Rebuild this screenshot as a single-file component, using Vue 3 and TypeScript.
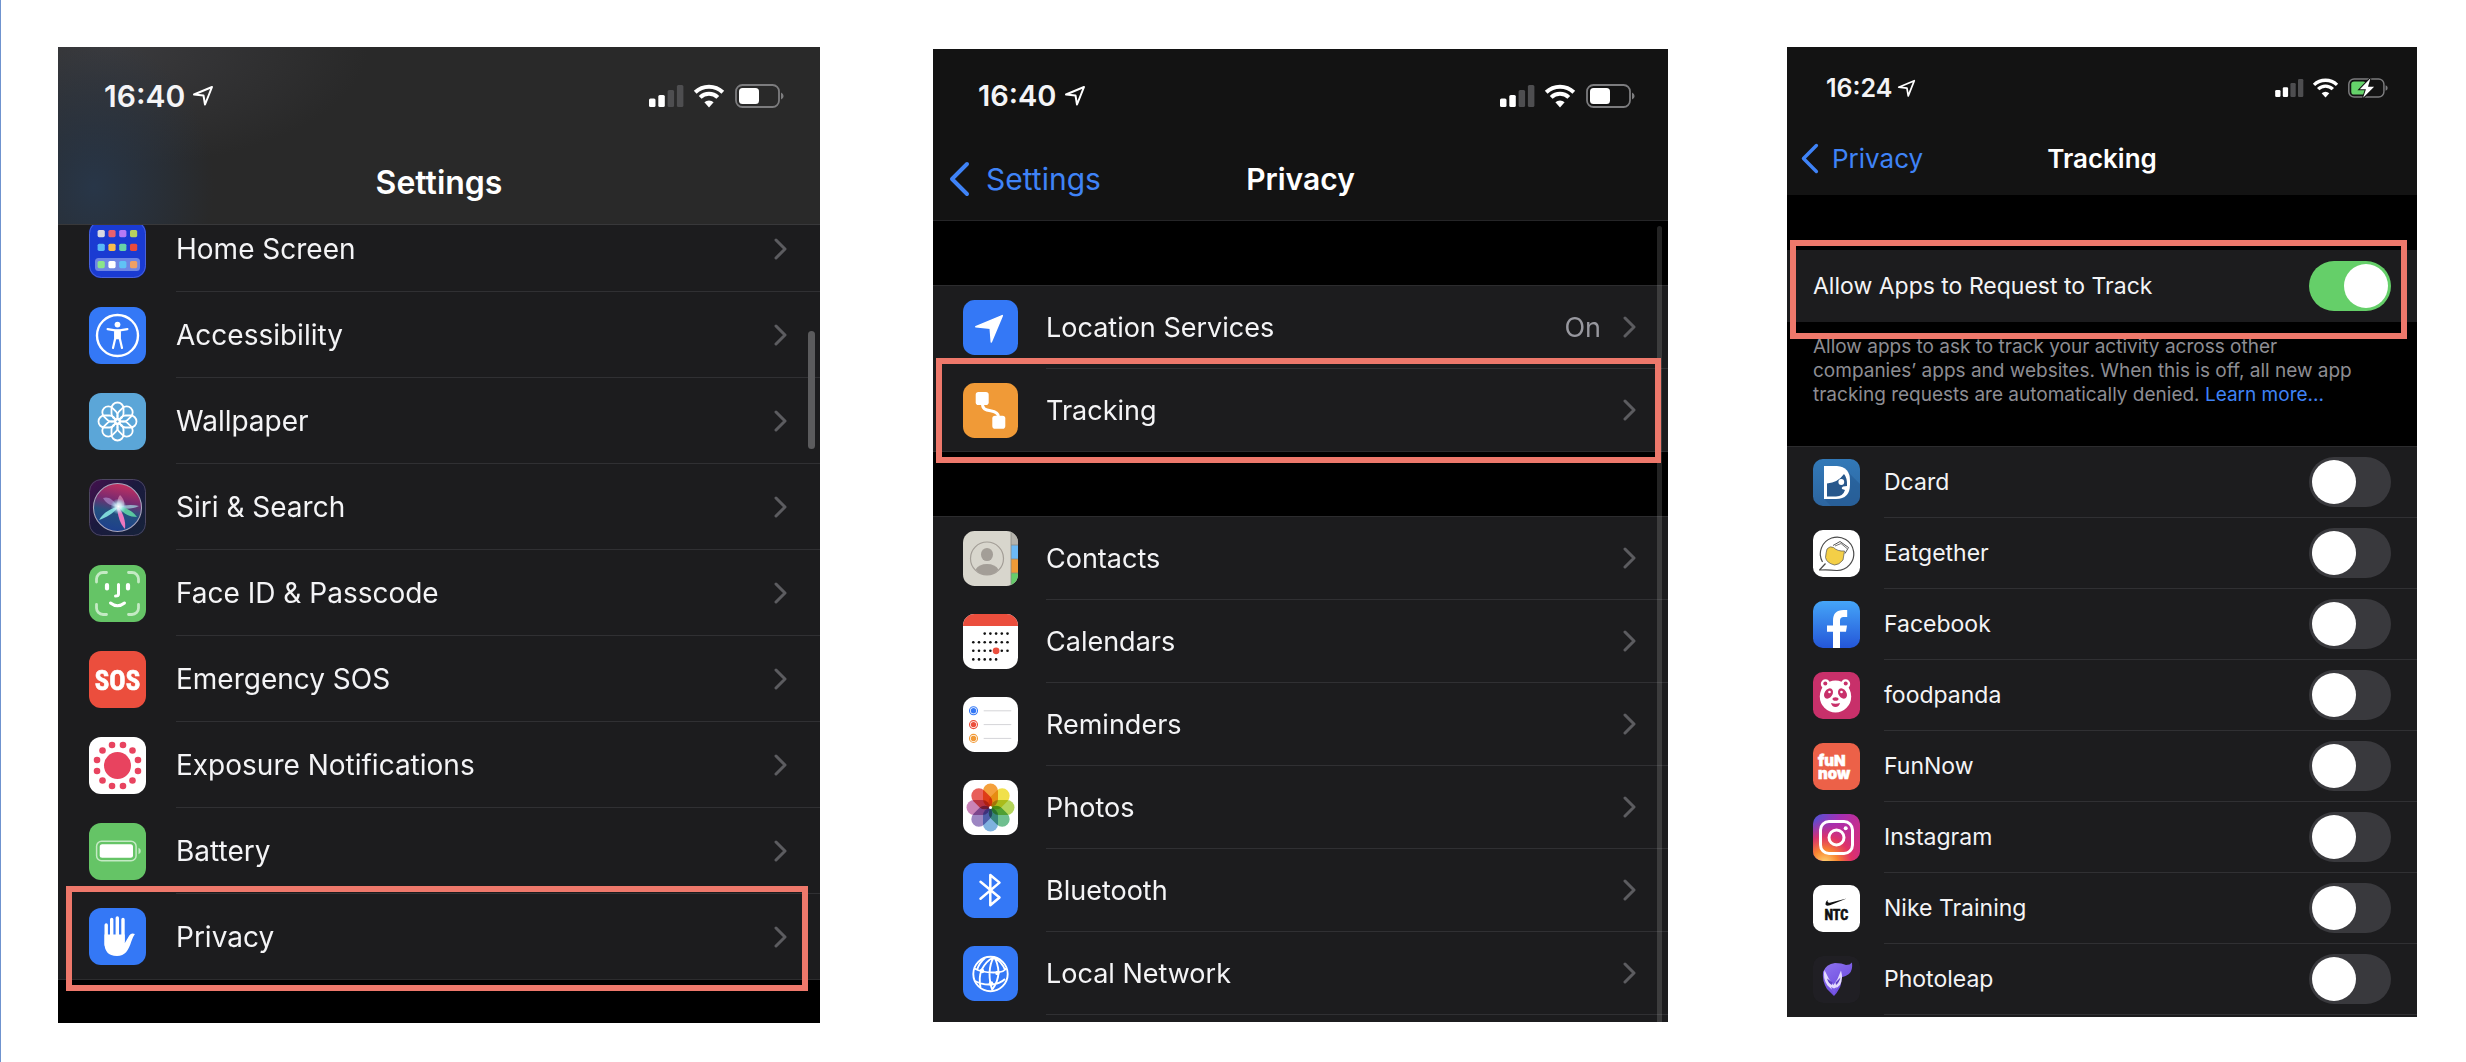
<script setup lang="ts">
import { ref } from 'vue'

interface Row {
  label: string
  icon: string
  value?: string
  marked?: boolean
}

interface AppRow {
  label: string
  icon: string
  on: boolean
}

const range = (n: number): number[] => Array.from({ length: n }, (_, i) => i)

const tile = (x: number, y: number, fill: string): string =>
  `<rect x="${x}" y="${y}" width="7.2" height="7.2" rx="1.6" fill="${fill}"/>`

const homeTiles = [
  ['#d9d9e2', '#e8606e', '#b57af5', '#b5d05f'],
  ['#58b8f7', '#f6bd4e', '#68d3a7', '#e94a3b'],
  ['#8be58a', '#ffffff', '#60c3f5', '#efa063'],
]
  .map((line, r) => line.map((c, i) => tile(8.6 + i * 10.8, [9, 22.7, 40][r], c)).join(''))
  .join('')

const exposureDots = range(12)
  .map((i) => {
    const a = ((15 + i * 30) * Math.PI) / 180
    return `<circle cx="${28.5 + 21.2 * Math.cos(a)}" cy="${28.5 + 21.2 * Math.sin(a)}" r="3.3"/>`
  })
  .join('')

const wallpaperPetals = range(8)
  .map((i) => `<rect x="-6" y="-19" width="12" height="17" rx="6" transform="rotate(${i * 45})"/>`)
  .join('')

const photoPetals = ['#f4a03c', '#f1e04b', '#b4d55a', '#6fbf8f', '#7fb2df', '#9c86c2', '#c983b8', '#e8605a']
  .map((c, i) => `<rect x="-7.5" y="-24" width="15" height="23.5" rx="7.5" fill="${c}" style="mix-blend-mode:multiply" transform="rotate(${i * 45})"/>`)
  .join('')

const calendarDots = [[2, 6], [0, 6], [0, 6], [0, 4]]
  .map(([from, to], r) =>
    range(7)
      .filter((i) => i >= from && i <= to)
      .map((i) => `<circle cx="${10.3 + i * 5.7}" cy="${19.6 + r * 8.6}" r="1.3"/>`)
      .join(''),
  )
  .join('')

const reminderLines = ['#3478f6', '#eb4e3d', '#f19a38']
  .map((c, i) => {
    const y = 13.8 + i * 13.8
    return `<circle cx="10.5" cy="${y}" r="4" fill="none" stroke="${c}" stroke-width="1.1"/><circle cx="10.5" cy="${y}" r="2.7" fill="${c}"/><path d="M20.7 ${y}H48.3" stroke="#d4d4d8" stroke-width="1"/>`
  })
  .join('')

const icons: Record<string, string> = {
  home: `<rect width="57" height="57" fill="#1a3bd2"/><rect x=".5" y=".5" width="56" height="56" rx="12" fill="none" stroke="#4a62d8"/><rect x="6" y="37" width="45" height="13" rx="3.5" fill="#6e86e4"/>${homeTiles}`,
  accessibility: `<rect width="57" height="57" fill="#3478f6"/><circle cx="28.5" cy="28.5" r="20.5" fill="none" stroke="#fff" stroke-width="2.4"/><circle cx="28.5" cy="17.6" r="2.9" fill="#fff"/><path d="M18.6 22.1l7.6 1.2h4.6l7.6-1.2M26.2 24v7.5L24 41M30.8 24v7.5L33 41" fill="none" stroke="#fff" stroke-width="2.2" stroke-linecap="round"/><path d="M25.6 22.8h5.8v9.4h-5.8z" fill="#fff"/>`,
  wallpaper: `<rect width="57" height="57" fill="#5ba6d8"/><g transform="translate(28.5 28.5)" fill="none" stroke="#fff" stroke-width="1.8">${wallpaperPetals}</g>`,
  siri: `<defs><linearGradient id="siriBg" x1="0" y1="0" x2="1" y2="1"><stop offset="0" stop-color="#46104e"/><stop offset=".45" stop-color="#1b1a3e"/><stop offset="1" stop-color="#15233a"/></linearGradient><linearGradient id="siriBall" x1=".6" y1="0" x2=".4" y2="1"><stop offset="0" stop-color="#c5305f"/><stop offset=".35" stop-color="#7a2a70"/><stop offset=".6" stop-color="#25507e"/><stop offset="1" stop-color="#1d3f8e"/></linearGradient><radialGradient id="siriGlow"><stop offset="0" stop-color="#fff"/><stop offset=".4" stop-color="#d6fbff" stop-opacity=".8"/><stop offset="1" stop-color="#8ef" stop-opacity="0"/></radialGradient></defs><rect width="57" height="57" fill="url(#siriBg)"/><rect x=".5" y=".5" width="56" height="56" rx="12" fill="none" stroke="#4c4660"/><circle cx="28.5" cy="28.5" r="24" fill="url(#siriBall)" stroke="#a9a6bd" stroke-width="1.1"/><path d="M29 28C24 20 19 17 14 19c3 6 9 8 15 9z" fill="#b89bd8" opacity=".6"/><path d="M28 28c0-6 1-10 3-12 4 4 5 8 4 12z" fill="#e8a0c4" opacity=".6"/><path d="M29 28C22 29 14 34 10 41c8-3 15-7 19-13z" fill="#8df0e6" opacity=".85"/><path d="M28 28c7-2 15-3 22-1-6 3-15 4-22 1z" fill="#a0c8d8" opacity=".8"/><path d="M29 27c7 1 15 5 19 11-8 0-15-4-19-11z" fill="#5fd4a4" opacity=".9"/><path d="M28 29c1 8 3 16 8 21 1-8-2-16-6-21z" fill="#ee78bf"/><circle cx="29.5" cy="27.5" r="8" fill="url(#siriGlow)"/>`,
  faceid: `<rect width="57" height="57" fill="#65c466"/><path d="M7.5 17v-3a6.5 6.5 0 0 1 6.500-6.500h3.500M39.500 7.500H43a6.500 6.500 0 0 1 6.500 6.500v3M49.500 39.500V43a6.500 6.500 0 0 1-6.500 6.500h-3.500M17.500 49.500H14A6.500 6.500 0 0 1 7.500 43v-3.500" fill="none" stroke="#c4eac4" stroke-width="2.800" stroke-linecap="round"/><path d="M18 20v3.500M39 20v3.500" stroke="#fff" stroke-width="4.200" stroke-linecap="round"/><path d="M29.500 19.500v9.500q0 2-3 2M21.500 38q7 5.500 14 0" fill="none" stroke="#fff" stroke-width="3" stroke-linecap="round"/>`,
  sos: `<rect width="57" height="57" fill="#eb4e3d"/><text x="28.5" y="38.5" font-size="27" font-weight="700" font-family="'Liberation Sans Narrow','Roboto Condensed','DejaVu Sans Condensed',sans-serif" text-anchor="middle" fill="#fff" stroke="#fff" stroke-width=".6">SOS</text>`,
  exposure: `<rect width="57" height="57" fill="#fff"/><g fill="#e8435f"><circle cx="28.5" cy="28.5" r="13.5"/>${exposureDots}</g>`,
  battery: `<rect width="57" height="57" fill="#65c466"/><rect x="7.600" y="18.200" width="39.500" height="19.500" rx="5" fill="none" stroke="#c4eac4" stroke-width="1.500"/><rect x="10.700" y="21.200" width="33.300" height="13.500" rx="2.500" fill="#fff"/><path d="M49.500 24.800q2.300 1 2.300 3.200t-2.300 3.200z" fill="#c4eac4"/>`,
  hand: `<rect width="57" height="57" fill="#3478f6"/><path d="M17.200 17v20M22.700 11.500v22M28.300 10v22M34 11.500v22" stroke="#fff" stroke-width="3.400" stroke-linecap="round"/><path d="M15.500 26.500h20.200v8.800l4.600-7.800q2-3 5.600-1.500-2.200 3-3.600 7.500C39.500 42.500 36 48 28 48 19 48 15.500 42.500 15.500 35.500z" fill="#fff"/>`,
  location: `<rect width="55" height="55" fill="#3478f6"/><path d="M12.800 26.800L39.300 15.600 28.300 42 27.200 28.200z" fill="#fff" stroke="#fff" stroke-width="1.500" stroke-linejoin="round"/>`,
  tracking: `<rect width="55" height="55" fill="#f09a37"/><rect x="12.700" y="9" width="13" height="13" rx="2.800" fill="#fff"/><rect x="29.300" y="32.700" width="13" height="13" rx="2.800" fill="#fff"/><path d="M19.500 21c0 5 3 6 8 6.800s8 2.200 8 6.200" fill="none" stroke="#fff" stroke-width="3"/>`,
  contacts: `<rect width="55" height="55" fill="#d8d6cd"/><path d="M48 0h7v14h-7z" fill="#b5b3ac"/><path d="M48 14h7v14h-7z" fill="#6cb9f5"/><path d="M48 28h7v14h-7z" fill="#ee9a37"/><path d="M48 42h7v13h-7z" fill="#65cc6a"/><path d="M48 0v55M48 14h7M48 28h7M48 42h7" stroke="#8c8a84" stroke-width=".8"/><circle cx="24" cy="27.500" r="16.500" fill="none" stroke="#a39e97" stroke-width="1.200"/><ellipse cx="24" cy="23.500" rx="6" ry="6.600" fill="#a39e97"/><path d="M12.500 38.500Q16 33 24 33t11.500 5.500Q31 44 24 44t-11.500-5.500z" fill="#a39e97"/>`,
  calendars: `<rect width="55" height="55" fill="#fff"/><path d="M0 0h55v12H0z" fill="#eb4e3d"/><g fill="#111">${calendarDots}</g><circle cx="33.100" cy="36.800" r="3.400" fill="#eb4e3d"/>`,
  reminders: `<rect width="55" height="55" fill="#fff"/>${reminderLines}`,
  photos: `<rect width="55" height="55" fill="#fff"/><g transform="translate(27.5 27.5)" style="isolation:isolate">${photoPetals}</g><circle cx="27.500" cy="27.500" r="1.500" fill="#fff"/>`,
  bluetooth: `<rect width="55" height="55" fill="#3478f6"/><path d="M17.500 18.800L36.500 34.500 27.300 42.300V12L36.500 19.600 17.500 35.700" fill="none" stroke="#fff" stroke-width="2.500" stroke-linejoin="round" stroke-linecap="round"/>`,
  network: `<rect width="55" height="55" fill="#3478f6"/><g fill="none" stroke="#fff" stroke-width="1.900"><circle cx="27.500" cy="28" r="17.200"/><path d="M11.500 22.500q7 4 19 4t12.500-4.500M31 11q-8 4-12.500 13-3 8-1 17.500M31 11q-4 6-4.500 16 0 10 3 17.500M31 11q4 6 4.500 15 0 9-6.500 18M22 12q-6 5-8 12M12 35q7 4 16 3.500t14-5.500M31 11q8 5 11 13"/></g><g fill="#fff"><circle cx="19" cy="25" r="2.300"/><circle cx="34.500" cy="27" r="2.300"/><circle cx="28" cy="37.500" r="2.300"/></g>`,
  dcard: `<defs><linearGradient id="dcardBg" x1="0" y1="0" x2="0" y2="1"><stop offset="0" stop-color="#3279b8"/><stop offset="1" stop-color="#2d659f"/></linearGradient></defs><rect width="47" height="47" fill="url(#dcardBg)"/><path d="M31 9l16 16v22H18l-6-6z" fill="#255a92" opacity=".6"/><path d="M11 7h13q13 1 13 14.500v4Q37 40 23 40H11z" fill="#fff"/><path d="M14 24.500q11-1 17-9.500 3.500 4 3 12l-4 .5q-2 1-1 2.500l3 1q-2 6.500-9 6.500h-9z" fill="#28588c"/><circle cx="28.300" cy="23" r="2.900" fill="#fff"/>`,
  eatgether: `<rect width="47" height="47" fill="#fff"/><path d="M9.500 32a16.700 16.700 0 1 1 14 8.500q-8-1-17-.5l6-6.500" fill="none" stroke="#4b4b4b" stroke-width="1.200" stroke-linejoin="round"/><path d="M14 19q3-3.500 6.500-1.500 4 4 11 3.500l-1.500 9q-4 5-8.500 5-8-2-9-7.500.5-5 1.500-8.500z" fill="#f4cf47" stroke="#555" stroke-width=".7"/><path d="M20 15.500l7-4 8.500 6-3.500 6" fill="none" stroke="#555" stroke-width="1"/><path d="M22 16l6-2.500 6 5" fill="none" stroke="#777" stroke-width="1"/>`,
  facebook: `<defs><linearGradient id="fbBg" x1="0" y1="0" x2="0" y2="1"><stop offset="0" stop-color="#45a5f8"/><stop offset="1" stop-color="#2456d8"/></linearGradient></defs><rect width="47" height="47" fill="url(#fbBg)"/><path d="M34.200 12.500h-3.700q-7 0-7 7V47" fill="none" stroke="#fff" stroke-width="7"/><path d="M14 24.600h20l-1 6.200H14z" fill="#fff"/>`,
  foodpanda: `<rect width="47" height="47" fill="#c8306a"/><g fill="#fff"><circle cx="12.500" cy="12" r="4.700"/><circle cx="32.500" cy="12" r="4.700"/><ellipse cx="22.500" cy="24.500" rx="15.700" ry="16"/></g><g fill="#c8306a"><circle cx="12.300" cy="11.500" r="2"/><circle cx="32.700" cy="11.500" r="2"/><ellipse cx="15.500" cy="21.500" rx="4" ry="5.600" transform="rotate(32 15.500 21.500)"/><ellipse cx="29.500" cy="21.500" rx="4" ry="5.600" transform="rotate(-32 29.500 21.500)"/><ellipse cx="22.500" cy="27" rx="3" ry="1.800"/><path d="M18 31q4.500 1.500 9 0-1 4-4.500 4T18 31z"/></g><g fill="#fff"><circle cx="16.500" cy="20" r="1.300"/><circle cx="28.500" cy="20" r="1.300"/></g>`,
  funnow: `<rect width="47" height="47" fill="#ec6148"/><g fill="#fff" stroke="#fff" stroke-width=".5" font-weight="900" font-family="Inter,'Open Sans',sans-serif"><text x="5" y="23" font-size="15">fuN</text><text x="5" y="36" font-size="15">now</text></g>`,
  instagram: `<defs><linearGradient id="igTop" x1="0" y1="0" x2="1" y2=".6"><stop offset="0" stop-color="#4b55d6"/><stop offset=".45" stop-color="#a62fb4"/><stop offset="1" stop-color="#d42e7c"/></linearGradient><radialGradient id="igGlow" cx=".25" cy="1.050" r=".95"><stop offset="0" stop-color="#ffd776"/><stop offset=".3" stop-color="#f9852f"/><stop offset=".6" stop-color="#e5325f" stop-opacity=".85"/><stop offset="1" stop-color="#c02d98" stop-opacity="0"/></radialGradient></defs><rect width="47" height="47" fill="url(#igTop)"/><rect width="47" height="47" fill="url(#igGlow)"/><g fill="none" stroke="#fff" stroke-width="3"><rect x="7.500" y="7.500" width="32" height="32" rx="8.500"/><circle cx="23.500" cy="23.500" r="7.500"/></g><circle cx="32.700" cy="14.200" r="2" fill="#fff"/>`,
  nike: `<rect width="47" height="47" fill="#fff"/><path d="M33.700 13.500L17 20.200q-4 1.300-4.600-1-.2-2 2.300-4.500-.8 3.300 2 3z" fill="#111"/><text x="23.300" y="35" font-size="14" font-weight="700" font-family="'Liberation Sans Narrow','Roboto Condensed','DejaVu Sans Condensed',sans-serif" text-anchor="middle" fill="#111" stroke="#111" stroke-width=".6">NTC</text>`,
  photoleap: `<defs><linearGradient id="foxFur" x1="0" y1="0" x2=".6" y2="1"><stop offset="0" stop-color="#8f74f0"/><stop offset="1" stop-color="#6a48dd"/></linearGradient></defs><rect width="47" height="47" rx="10" fill="#201f24"/><path d="M10 16q3-8 12-9 7 0 11 2 4 0 6-2.500 1 8-3 11.500-4 3-8 3.500 1 7-2 11.500-2 4-5 7-3-3-7-7-5-8-4-17z" fill="url(#foxFur)"/><path d="M11.500 14l4.500 9 4.500 6 4-6 3.500-8.500q2.500 8.500-1 14.500l-6.500 6-6-5.500q-5-7-3-15.500z" fill="#e3dafd"/><path d="M14 22.500l5.500 4-.5 2.500q-3.500-1.500-5-6.500zM27.500 21.500l-5 5 .5 2.500q3-2 4.500-7.500z" fill="#5d3fc4"/><path d="M18 31l3 1.500 3-1.500-3 8z" fill="#7a5ae6"/>`,
}

const settingsRows: Row[] = [
  { label: 'Home Screen', icon: 'home' },
  { label: 'Accessibility', icon: 'accessibility' },
  { label: 'Wallpaper', icon: 'wallpaper' },
  { label: 'Siri & Search', icon: 'siri' },
  { label: 'Face ID & Passcode', icon: 'faceid' },
  { label: 'Emergency SOS', icon: 'sos' },
  { label: 'Exposure Notifications', icon: 'exposure' },
  { label: 'Battery', icon: 'battery' },
  { label: 'Privacy', icon: 'hand', marked: true },
]

const privacyGroups: Row[][] = [
  [
    { label: 'Location Services', icon: 'location', value: 'On' },
    { label: 'Tracking', icon: 'tracking', marked: true },
  ],
  [
    { label: 'Contacts', icon: 'contacts' },
    { label: 'Calendars', icon: 'calendars' },
    { label: 'Reminders', icon: 'reminders' },
    { label: 'Photos', icon: 'photos' },
    { label: 'Bluetooth', icon: 'bluetooth' },
    { label: 'Local Network', icon: 'network' },
  ],
]

const allowTracking = ref(true)
const apps = ref<AppRow[]>([
  { label: 'Dcard', icon: 'dcard', on: false },
  { label: 'Eatgether', icon: 'eatgether', on: false },
  { label: 'Facebook', icon: 'facebook', on: false },
  { label: 'foodpanda', icon: 'foodpanda', on: false },
  { label: 'FunNow', icon: 'funnow', on: false },
  { label: 'Instagram', icon: 'instagram', on: false },
  { label: 'Nike Training', icon: 'nike', on: false },
  { label: 'Photoleap', icon: 'photoleap', on: false },
])

const arrowPath = 'M2 9.500L20 2 13 19.500 11.500 10.500z'
const signalArt =
  '<rect x="0" y="13.500" width="6.500" height="8.500" rx="1.500" fill="#fff"/><rect x="9.300" y="10" width="6.500" height="12" rx="1.500" fill="#fff"/><rect x="18.600" y="5" width="6.500" height="17" rx="1.500" fill="#4e4e50"/><rect x="27.900" y="0" width="6.500" height="22" rx="1.500" fill="#4e4e50"/>'
const wifiArt =
  '<path d="M2.200 8.200a20 20 0 0 1 27.600 0M7.200 13.300a12.500 12.500 0 0 1 17.600 0" fill="none" stroke="#fff" stroke-width="4"/><path d="M16 23.500l-4.600-5.200a6.500 6.500 0 0 1 9.200 0z" fill="#fff"/>'
const batteryShell =
  '<rect x="1" y="1" width="43" height="22" rx="6.500" fill="none" stroke="#7c7c7e" stroke-width="1.800"/><path d="M46 8.500q2.600 1 2.600 3.500T46 15.500z" fill="#7c7c7e"/>'
const batteryArt = `${batteryShell}<rect x="4" y="4" width="20" height="16" rx="3.500" fill="#fff"/>`
const chargingArt = `${batteryShell}<rect x="4" y="4" width="18" height="16" rx="3.500" fill="#65d26a"/><path d="M27.500 0L14.500 13.500h7.500L18.500 24 32 10.500h-7.500z" fill="#fff" stroke="#131313" stroke-width="2.500" paint-order="stroke"/>`
</script>

<template>
  <main class="page">
    <section class="phone phone-settings" aria-label="Settings">
      <header class="top">
        <div class="status">
          <span class="time">16:40</span>
          <svg class="arrow" viewBox="0 0 22 22"><path :d="arrowPath" /></svg>
          <svg class="signal" viewBox="0 0 35 22" v-html="signalArt" />
          <svg class="wifi" viewBox="0 0 32 24" v-html="wifiArt" />
          <svg class="cell" viewBox="0 0 49 24" v-html="batteryArt" />
        </div>
        <div class="nav"><h1>Settings</h1></div>
      </header>
      <nav class="group tucked">
        <a v-for="row in settingsRows" :key="row.label" href="#" class="row" :class="{ marked: row.marked }">
          <svg class="icon" viewBox="0 0 57 57" v-html="icons[row.icon]" />
          <span class="body">
            <span class="label">{{ row.label }}</span>
            <svg class="chevron" viewBox="0 0 13 22"><path d="M2 2l9 9-9 9" /></svg>
          </span>
        </a>
      </nav>
      <span class="thumb" />
    </section>

    <section class="phone phone-privacy" aria-label="Privacy">
      <header class="top">
        <div class="status">
          <span class="time">16:40</span>
          <svg class="arrow" viewBox="0 0 22 22"><path :d="arrowPath" /></svg>
          <svg class="signal" viewBox="0 0 35 22" v-html="signalArt" />
          <svg class="wifi" viewBox="0 0 32 24" v-html="wifiArt" />
          <svg class="cell" viewBox="0 0 49 24" v-html="batteryArt" />
        </div>
        <div class="nav">
          <a href="#" class="back"><svg viewBox="0 0 22 36"><path d="M19 3L4 18l15 15" /></svg>Settings</a>
          <h1>Privacy</h1>
        </div>
      </header>
      <nav v-for="(group, g) in privacyGroups" :key="g" class="group">
        <a v-for="row in group" :key="row.label" href="#" class="row" :class="{ marked: row.marked }">
          <svg class="icon" viewBox="0 0 55 55" v-html="icons[row.icon]" />
          <span class="body">
            <span class="label">{{ row.label }}</span>
            <span v-if="row.value" class="value">{{ row.value }}</span>
            <svg class="chevron" viewBox="0 0 13 22"><path d="M2 2l9 9-9 9" /></svg>
          </span>
        </a>
      </nav>
      <span class="thumb" />
    </section>

    <section class="phone phone-tracking" aria-label="Tracking">
      <header class="top">
        <div class="status">
          <span class="time">16:24</span>
          <svg class="arrow" viewBox="0 0 22 22"><path :d="arrowPath" /></svg>
          <svg class="signal" viewBox="0 0 35 22" v-html="signalArt" />
          <svg class="wifi" viewBox="0 0 32 24" v-html="wifiArt" />
          <svg class="cell" viewBox="0 0 49 24" v-html="chargingArt" />
        </div>
        <div class="nav">
          <a href="#" class="back"><svg viewBox="0 0 22 36"><path d="M19 3L4 18l15 15" /></svg>Privacy</a>
          <h1>Tracking</h1>
        </div>
      </header>
      <label class="row allow marked">
        <span class="label">Allow Apps to Request to Track</span>
        <input v-model="allowTracking" type="checkbox" role="switch" class="switch" />
      </label>
      <p class="note">
        Allow apps to ask to track your activity across other companies’ apps and websites. When this is off, all new
        app tracking requests are automatically denied. <a href="#">Learn more...</a>
      </p>
      <div class="group">
        <label v-for="app in apps" :key="app.label" class="row">
          <svg class="icon" viewBox="0 0 47 47" v-html="icons[app.icon]" />
          <span class="body">
            <span class="label">{{ app.label }}</span>
            <input v-model="app.on" type="checkbox" role="switch" class="switch" />
          </span>
        </label>
      </div>
    </section>
  </main>
</template>

<style>
body {
  margin: 0;
  background: #fff;
}
</style>

<style scoped>
* {
  box-sizing: border-box;
}

.page {
  display: flex;
  align-items: flex-start;
  min-height: 100vh;
  padding: 47px 49px 39px 57px;
  border-left: 1px solid #6f93cf;
  background: #fff;
  font-family: Inter, 'Liberation Sans', sans-serif;
  color: #f4f4f6;
}

.phone {
  position: relative;
  min-width: 0;
  background: #000;
  overflow: hidden;
}

.phone-settings {
  flex: 762 1 0;
  padding-bottom: 43px;
  font-size: 28px;
  --icon: 57px;
  --row: 86px;
  --indent: 31px;
  --gap: 30px;
  --end: 33px;
  --mark: -8px 12px -12px 8px;
}

.phone-privacy {
  flex: 735 1 0;
  margin: 2px 0 0 113px;
  font-size: 27px;
  --icon: 55px;
  --row: 83px;
  --indent: 30px;
  --gap: 28px;
  --end: 32px;
  --mark: -11px 7px -12px 3px;
}

.phone-tracking {
  flex: 630 1 0;
  margin-left: 119px;
  padding-bottom: 2px;
  background: #1c1c1e;
  font-size: 23px;
  --icon: 47px;
  --row: 71px;
  --indent: 26px;
  --gap: 24px;
  --end: 26px;
  --mark: -10px 10px -17px 3px;
}

.top {
  position: relative;
  z-index: 1;
  background: #131313;
  border-bottom: 1px solid #252527;
}

.phone-settings .top {
  padding-bottom: 5px;
  border-color: #38383a;
  background:
    radial-gradient(ellipse 120px 150px at 36px 140px, #283648, transparent),
    radial-gradient(ellipse 260px 120px at 50px 0, #3a3a3d, transparent),
    #292929;
}

.phone-privacy .top {
  padding-bottom: 4px;
}

.phone-tracking .top {
  padding-bottom: 7px;
  border-color: #131313;
}

.status {
  display: flex;
  align-items: center;
  height: 98px;
  padding: 0 36px 0 46px;
}

.phone-privacy .status {
  height: 93px;
  padding: 0 33px 0 45px;
}

.phone-tracking .status {
  height: 82px;
  padding: 0 29px 0 39px;
}

.time {
  font-size: 30px;
  font-weight: 600;
}

.arrow {
  width: 22px;
  height: 22px;
  margin: 0 auto 0 7px;
}

.arrow path {
  fill: none;
  stroke: #fff;
  stroke-width: 2;
  stroke-linejoin: round;
}

.signal {
  width: 35px;
  height: 22px;
}

.wifi {
  width: 32px;
  height: 24px;
  margin: 0 10px 0 9px;
}

.cell {
  width: 49px;
  height: 24px;
}

.phone-privacy .time {
  font-size: 29px;
}

.phone-tracking .time {
  font-size: 25px;
}

.phone-tracking .arrow {
  width: 19px;
  height: 19px;
  margin-left: 5px;
}

.phone-tracking .signal {
  width: 29px;
  height: 18px;
}

.phone-tracking .wifi {
  width: 27px;
  height: 20px;
  margin: 0 9px 0 8px;
}

.phone-tracking .cell {
  width: 40px;
  height: 20px;
}

.nav {
  display: grid;
  grid-template-columns: 1fr auto 1fr;
  align-items: center;
  height: 74px;
  padding: 0 15px;
}

.phone-tracking .nav {
  height: 58px;
  padding: 0 13px;
}

h1 {
  grid-column: 2;
  margin: 0;
  font-size: 32px;
  font-weight: 600;
  color: #fff;
}

.phone-privacy h1 {
  font-size: 30px;
}

.phone-tracking h1 {
  font-size: 26px;
}

.back {
  display: flex;
  align-items: center;
  gap: 16px;
  font-size: 30px;
  color: #3f83f7;
  text-decoration: none;
}

.back svg {
  width: 22px;
  height: 36px;
  fill: none;
  stroke: currentColor;
  stroke-width: 4;
  stroke-linecap: round;
  stroke-linejoin: round;
}

.phone-tracking .back {
  gap: 13px;
  font-size: 26px;
}

.phone-tracking .back svg {
  width: 19px;
  height: 31px;
}

.group {
  background: #1c1c1e;
}

.tucked {
  margin-top: -19px;
}

.phone-privacy .group {
  margin-top: 64px;
  border-top: 1px solid #2c2c2e;
}

.phone-privacy .group:last-of-type {
  padding-bottom: 7px;
}

.phone-tracking .group {
  border-top: 1px solid #2c2c2e;
}

.row {
  position: relative;
  display: flex;
  align-items: center;
  gap: var(--gap);
  height: var(--row);
  padding-left: var(--indent);
  color: inherit;
  text-decoration: none;
}

.icon {
  flex: none;
  width: var(--icon);
  height: var(--icon);
  border-radius: 21%;
  overflow: hidden;
}

.body {
  display: flex;
  flex: 1;
  align-items: center;
  height: 100%;
  padding-right: var(--end);
  border-bottom: 1px solid #303033;
}

.phone-settings .row:last-child,
.phone-privacy .group:nth-of-type(1) .row:last-child {
  border-bottom: 1px solid #2c2c2e;
}

.phone-settings .row:last-child .body,
.phone-privacy .group:nth-of-type(1) .row:last-child .body {
  border-bottom: 0;
}

.label {
  flex: 1;
  white-space: nowrap;
}

.value {
  margin-right: 22px;
  color: #98989f;
}

.chevron {
  width: 13px;
  height: 22px;
  fill: none;
  stroke: #5c5c60;
  stroke-width: 3;
  stroke-linecap: round;
  stroke-linejoin: round;
}

.marked::after {
  content: '';
  position: absolute;
  z-index: 3;
  inset: var(--mark);
  border: 6px solid #ee786b;
  pointer-events: none;
}

.thumb {
  position: absolute;
  top: 284px;
  right: 5px;
  z-index: 2;
  width: 7px;
  height: 118px;
  border-radius: 4px;
  background: #5b5b5d;
}

.phone-privacy .thumb {
  top: 177px;
  right: 6px;
  bottom: 0;
  width: 5px;
  height: auto;
  border-radius: 3px 3px 0 0;
  background: rgba(255, 255, 255, 0.14);
}

.allow {
  height: 127px;
  padding: 0 26px;
  border-top: 55px solid #000;
  background: #1c1c1e;
}

.switch {
  position: relative;
  flex: none;
  width: 82px;
  height: 50px;
  margin: 0;
  border-radius: 25px;
  background: #39393d;
  appearance: none;
}

.switch::before {
  content: '';
  position: absolute;
  top: 3px;
  left: 3px;
  width: 44px;
  height: 44px;
  border-radius: 50%;
  background: #fff;
}

.switch:checked {
  background: #65cf69;
}

.switch:checked::before {
  left: 35px;
}

.note {
  margin: 0;
  padding: 13px 46px 39px 26px;
  background: #000;
  font-size: 19px;
  line-height: 24px;
  color: #8d8d93;
}

.note a {
  color: #3f83f7;
  text-decoration: none;
}
</style>
